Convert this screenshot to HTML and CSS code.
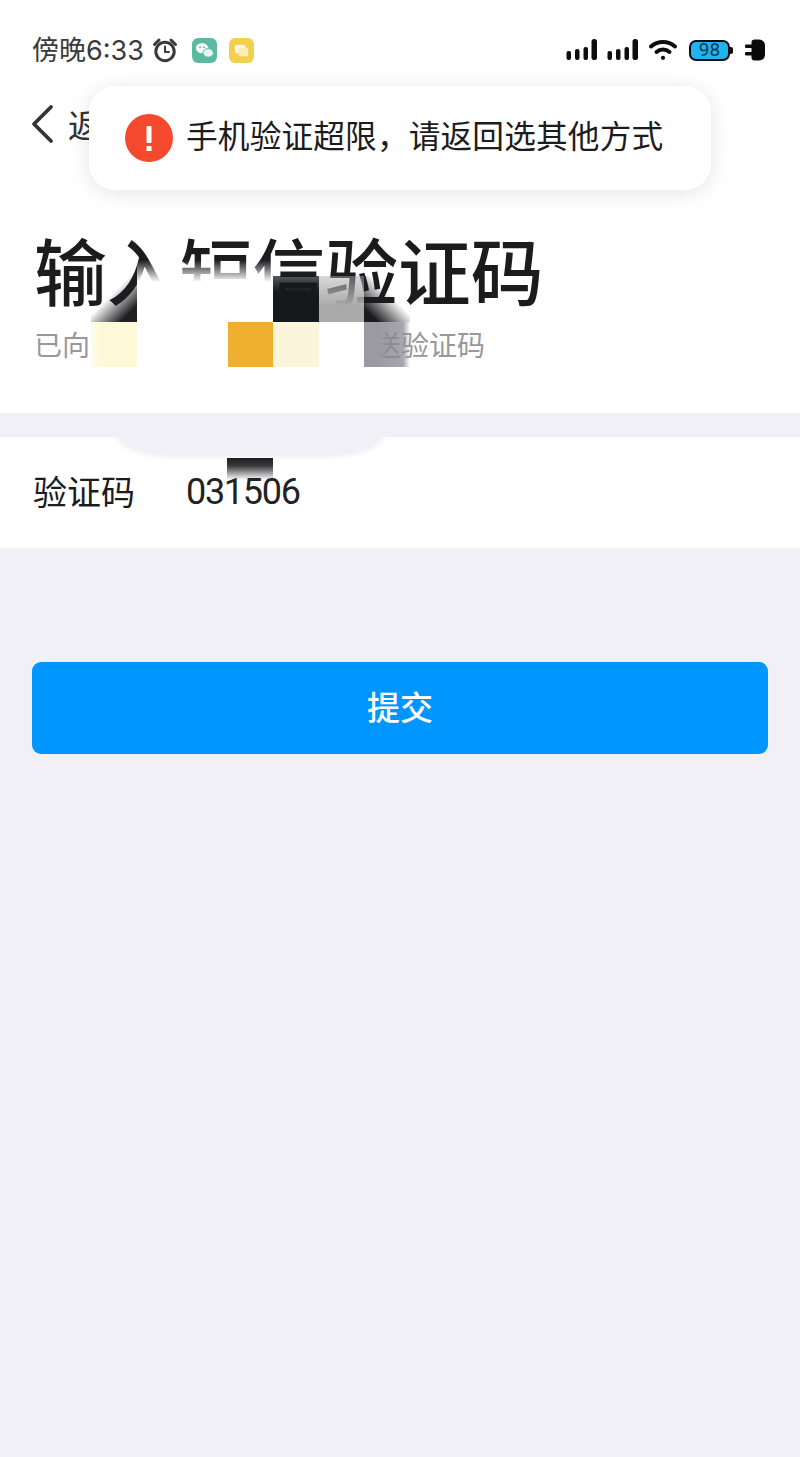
FILE: index.html
```html
<!DOCTYPE html>
<html lang="zh-CN">
<head>
<meta charset="utf-8">
<title>输入短信验证码</title>
<link rel="stylesheet" href="styles.css">
</head>
<body>
<main class="screen">
  <section class="head">
    <div class="status">
      <div class="status-left">
        <span class="time">傍晚6:33</span>
        <svg class="alarm" width="26" height="26" viewBox="0 0 26 26" fill="none" stroke="#3a3a3a">
          <circle cx="13" cy="14.500" r="9.200" stroke-width="3"/>
          <path d="M13 9.500v5.500h4" stroke-width="2" stroke-linecap="round" stroke-linejoin="round"/>
          <path d="M2.500 7.500 7 3M23.500 7.500 19 3" stroke-width="3" stroke-linecap="round"/>
        </svg>
        <svg class="tile" width="25" height="25" viewBox="0 0 26 26">
          <rect width="26" height="26" rx="6.500" fill="#5cb8a0"/>
          <ellipse cx="10.500" cy="10.500" rx="6.500" ry="5.400" fill="#f4fbf8"/>
          <ellipse cx="16.800" cy="15.500" rx="5.400" ry="4.500" fill="#e4f5ef" stroke="#5cb8a0"/>
          <circle cx="8.400" cy="9.500" r=".9" fill="#5cb8a0"/>
          <circle cx="12.400" cy="9.500" r=".9" fill="#5cb8a0"/>
        </svg>
        <svg class="tile tile-chat" width="25" height="25" viewBox="0 0 26 26">
          <rect width="26" height="26" rx="6.500" fill="#f3cf50"/>
          <rect x="6" y="7" width="11" height="9" rx="2" fill="#fdf6dc"/>
          <rect x="10" y="10" width="10" height="9" rx="2" fill="#fbeeb8"/>
        </svg>
      </div>
      <div class="status-right">
        <svg width="31" height="22" viewBox="0 0 31 22" fill="#0d0d0d">
          <rect x="0.500" y="12" width="4.500" height="9" rx="2"/>
          <rect x="9" y="10" width="4.500" height="11" rx="2"/>
          <rect x="17.500" y="8" width="4.500" height="13" rx="2"/>
          <rect x="25.500" y="0" width="5.500" height="21" rx="2.500"/>
        </svg>
        <svg width="31" height="22" viewBox="0 0 31 22" fill="#0d0d0d">
          <rect x="0.500" y="12" width="4.500" height="9" rx="2"/>
          <rect x="9" y="10" width="4.500" height="11" rx="2"/>
          <rect x="17.500" y="8" width="4.500" height="13" rx="2"/>
          <rect x="25.500" y="0" width="5.500" height="21" rx="2.500"/>
        </svg>
        <svg class="wifi" width="28" height="22" viewBox="0 0 28 22" fill="none" stroke="#0d0d0d" stroke-width="4" stroke-linecap="round">
          <path d="M2 7.500C8.800 1.500 19.200 1.500 26 7.500"/>
          <path d="M7.500 13C11.200 9.800 16.800 9.800 20.500 13"/>
          <circle cx="14" cy="18.800" r="1.200" fill="#0d0d0d" stroke-width="1.800"/>
        </svg>
        <div class="battery">
          <span class="battery-body">98</span>
          <span class="battery-cap"></span>
        </div>
        <svg class="plug" width="20" height="22" viewBox="0 0 20 22" fill="#0a0a0a">
          <path d="M6.500 3C6.500 1.500 7.800 .5 9.500 .5H14c3.600 0 6 2.500 6 6v9c0 3.500-2.400 6-6 6H9.500c-1.700 0-3-1-3-2.500z"/>
          <rect x="0" y="5.500" width="8" height="3.500" rx="1.200"/>
          <rect x="0" y="13" width="8" height="3.500" rx="1.200"/>
        </svg>
      </div>
    </div>
    <nav class="nav">
      <svg width="24" height="40" viewBox="0 0 24 40" fill="none" stroke="#333" stroke-width="3.800" stroke-linecap="round" stroke-linejoin="round">
        <path d="M20 3 3 20l17 17"/>
      </svg>
      <span class="nav-label">返回</span>
    </nav>
    <h1 class="title">输入短信验证码</h1>
    <p class="sub"><span>已向</span><span class="sub-gap"></span><span>送验证码</span></p>
  </section>

  <section class="field">
    <span class="field-label">验证码</span>
    <span class="field-value">031506</span>
  </section>

  <div class="actions">
    <button class="submit" type="button">提交</button>
  </div>

  <div class="mosaic" aria-hidden="true">
    <i class="cell fade-corner-br"></i>
    <i class="cell veil wide"></i>
    <i class="cell ink"></i>
    <i class="cell smoke"></i>
    <i class="cell fade-corner-bl"></i>
    <i class="cell pale"></i>
    <i class="cell blank wide-2"></i>
    <i class="cell amber"></i>
    <i class="cell cream"></i>
    <i class="cell blank"></i>
    <i class="cell slate"></i>
  </div>
  <div class="smudge" aria-hidden="true"></div>
  <div class="drip" aria-hidden="true"></div>

  <div class="toast" role="alert">
    <svg class="toast-icon" width="48" height="48" viewBox="0 0 48 48">
      <circle cx="24" cy="24" r="24" fill="#f4492c"/>
      <rect x="21.500" y="12" width="5" height="17" rx="1" fill="#fff"/>
      <rect x="21.500" y="32" width="5" height="5" fill="#fff"/>
    </svg>
    <span class="toast-text">手机验证超限，请返回选其他方式</span>
  </div>
</main>
</body>
</html>
```
FILE: styles.css
```css
* { box-sizing: border-box; }

html, body { margin: 0; padding: 0; }

body {
  background: #f2f0f7;
  font-family: "Noto Sans CJK SC", "Noto Sans", Roboto, sans-serif;
  color: #1c1c1e;
}

.screen {
  position: relative;
  width: 800px;
  height: 1457px;
  overflow: hidden;
  background: #f2f0f7;
}

.head {
  background: #fff;
  height: 413px;
  padding-top: 32px;
}

.status {
  display: flex;
  justify-content: space-between;
  align-items: center;
  height: 36px;
  padding: 0 35px 0 32px;
}

.status-left, .status-right { display: flex; align-items: center; }

.time {
  font-family: Inter, "Noto Sans CJK SC", sans-serif;
  font-size: 27px;
  line-height: 36px;
  color: #3a3a3a;
  width: 120px;
  white-space: nowrap;
  position: relative;
  top: 1px;
}

.tile { margin-left: 14px; }
.tile-chat { margin-left: 12px; }

.status-right { gap: 10px; }
.wifi { margin-left: 1px; margin-right: 2px; }

.battery { display: flex; align-items: center; }

.battery-body {
  width: 41px;
  height: 21px;
  border: 2.500px solid #0d0d0d;
  border-radius: 7px;
  background: #22b2ee;
  color: #0c3a55;
  font-family: Roboto, sans-serif;
  font-size: 19px;
  line-height: 16px;
  text-align: center;
}

.battery-cap {
  width: 3px;
  height: 7px;
  background: #0d0d0d;
  border-radius: 0 2px 2px 0;
}

.plug { margin-left: 2px; }

.nav {
  display: flex;
  align-items: center;
  gap: 13px;
  height: 40px;
  margin-top: 36px;
  padding-left: 31px;
}

.nav-label { font-size: 33px; line-height: 40px; color: #333; }

.title {
  margin: 77px 0 5px;
  padding-left: 34px;
  font-size: 72.800px;
  line-height: 96px;
  font-weight: 500;
  color: #1c1c1e;
  white-space: nowrap;
}

.sub {
  display: flex;
  margin: 0;
  padding-left: 34px;
  font-size: 28px;
  line-height: 44px;
  color: #98989c;
}

.sub-gap { width: 283px; }

.field {
  display: flex;
  align-items: center;
  height: 111px;
  margin-top: 24px;
  padding: 0 0 5px 33px;
  background: #fff;
}

.field-label { width: 153px; font-size: 34px; color: #1c1c1e; }

.field-value {
  margin-top: 4px;
  font-family: Roboto, sans-serif;
  font-size: 36px;
  letter-spacing: -1.300px;
  color: #222;
}

.actions { padding: 114px 32px 0; }

.submit {
  display: block;
  width: 100%;
  height: 92px;
  padding: 0 0 5px;
  border: 0;
  border-radius: 9px;
  background: #0096ff;
  color: #fff;
  font-family: inherit;
  font-size: 33px;
  font-weight: 500;
}

/* Redaction mosaic painted over the phone number */
.mosaic {
  position: absolute;
  left: 91px;
  top: 276px;
  display: grid;
  grid-template-columns: repeat(7, 45.500px);
  grid-template-rows: 46px 45px;
}

.cell { display: block; }
.wide { grid-column: span 3; }
.wide-2 { grid-column: span 2; }

.veil {
  margin-top: -16px;
  background: linear-gradient(to bottom, rgba(255,255,255,0), #fff 22px);
}

.fade-corner-br { background: linear-gradient(135deg, rgba(31,31,34,0) 42%, #1f1f22 82%); }
.fade-corner-bl { background: linear-gradient(225deg, rgba(27,27,30,0) 42%, #1b1b1e 85%); }

.ink { background: linear-gradient(to bottom, rgba(21,25,28,.72), #15191c 16px); }
.smoke { background: linear-gradient(to bottom, rgba(170,170,172,.45), #aaa 30px); }
.pale { background: linear-gradient(to right, rgba(253,249,214,.5), #fdf9d6 10px); }
.blank { background: #fff; }
.amber { background: #eeb02e; }
.cream { background: #fbf5dc; }
.slate {
  background: linear-gradient(to right, #9b9aa2 30%, rgba(137,136,146,.82) 48%, rgba(137,136,146,.75) 85%, rgba(155,154,162,0) 100%);
}

.smudge {
  position: absolute;
  left: 115px;
  top: 434px;
  width: 270px;
  height: 24px;
  background: #f2f0f7;
  border-radius: 0 0 60px 60px / 0 0 100% 100%;
  filter: blur(2px);
}

.drip {
  position: absolute;
  left: 227px;
  top: 458px;
  width: 46px;
  height: 22px;
  background: linear-gradient(to bottom, #1d1d20 0, #3a3a3d 35%, rgba(255,255,255,0) 100%);
}

.toast {
  position: absolute;
  left: 89px;
  top: 86px;
  display: flex;
  align-items: center;
  width: 622px;
  height: 104px;
  padding-left: 36px;
  background: #fff;
  border-radius: 26px;
  box-shadow: 0 3px 22px rgba(0, 0, 0, .11);
}

.toast-icon { flex: none; }

.toast-text {
  margin: -8px 0 0 13px;
  font-size: 31.700px;
  letter-spacing: .13px;
  line-height: 44px;
  color: #1c1c1e;
  white-space: nowrap;
}
```
